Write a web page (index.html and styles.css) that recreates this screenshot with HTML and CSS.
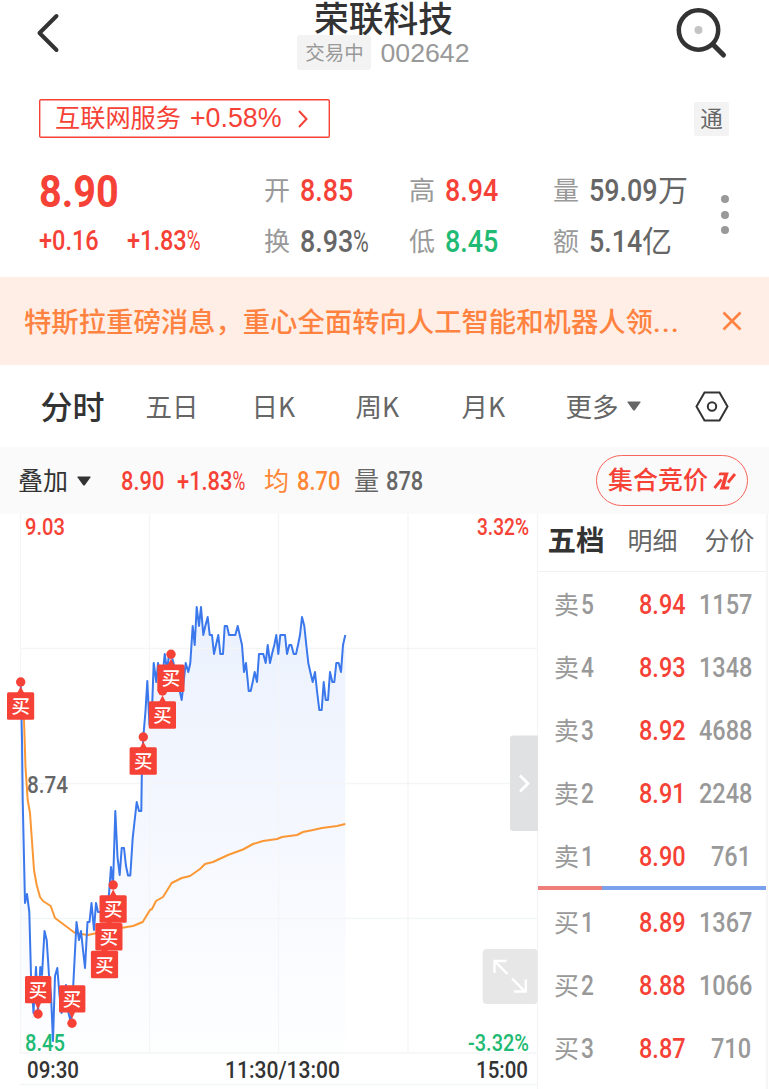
FILE: index.html
```html
<!DOCTYPE html>
<html lang="zh-CN">
<head>
<meta charset="utf-8">
<title>荣联科技 002642</title>
<link rel="stylesheet" href="styles.css">
</head>
<body>
<div class="app">
  <header class="header">
    <svg class="back" width="26" height="42" viewBox="0 0 26 42"><path d="M20.5 4 3.5 21 20.5 38"/></svg>
    <div class="stock">
      <h1>荣联科技</h1>
      <div class="sub"><span class="status">交易中</span><span class="code">002642</span></div>
    </div>
    <svg class="search" width="54" height="54" viewBox="0 0 54 54"><circle class="ring" cx="24.5" cy="24" r="19.7"/><path d="M39 38.5 49.5 49"/><circle class="dot" cx="24.5" cy="24" r="4"/></svg>
  </header>

  <div class="sector-row">
    <div class="sector"><span>互联网服务</span><b>+0.58%</b><svg width="12" height="20" viewBox="0 0 12 20"><path d="M2 2 9.5 10 2 18"/></svg></div>
    <span class="connect">通</span>
  </div>

  <section class="quote">
    <div class="last">
      <div class="price num">8.90</div>
      <div class="change"><span class="num">+0.16</span><span class="num">+1.83<em>%</em></span></div>
    </div>
    <div class="stats">
      <div class="stat"><span>开</span><b class="num red">8.85</b></div>
      <div class="stat"><span>高</span><b class="num red">8.94</b></div>
      <div class="stat"><span>量</span><b class="num four">59.09</b><i>万</i></div>
      <div class="stat"><span>换</span><b class="num">8.93<em>%</em></b></div>
      <div class="stat"><span>低</span><b class="num green">8.45</b></div>
      <div class="stat"><span>额</span><b class="num three">5.14</b><i>亿</i></div>
    </div>
    <div class="more-dots"><i></i><i></i><i></i></div>
  </section>

  <div class="banner">
    <p>特斯拉重磅消息，重心全面转向人工智能和机器人领<span>...</span></p>
    <svg width="20" height="20" viewBox="0 0 20 20"><path d="M1.5 1.5 18.5 18.5M18.5 1.5 1.5 18.5"/></svg>
  </div>

  <nav class="tabs">
    <a class="active">分时</a><a>五日</a><a>日K</a><a>周K</a><a>月K</a>
    <a class="drop">更多<svg width="14" height="10" viewBox="0 0 14 10"><path d="M1 .5H13Q14 .5 13.4 1.5L8 9Q7 10 6 9L.6 1.5Q0 .5 1 .5Z"/></svg></a>
    <svg class="hex" width="34" height="31" viewBox="0 0 34 31"><path d="M9.5 1.5H24.5L32.5 15.5 24.5 29.5H9.5L1.5 15.5Z"/><circle cx="17" cy="15.5" r="4.2"/></svg>
  </nav>

  <div class="toolbar">
    <span class="overlay">叠加</span>
    <svg class="tri" width="14" height="10" viewBox="0 0 14 10"><path d="M1 .5H13Q14 .5 13.4 1.5L8 9Q7 10 6 9L.6 1.5Q0 .5 1 .5Z"/></svg>
    <b class="num red t1">8.90</b><b class="num red t2">+1.83<em>%</em></b>
    <span class="avg">均</span><b class="num avg t3">8.70</b>
    <span class="vol">量</span><b class="num t4">878</b>
    <div class="auction">集合竞价<svg width="24" height="20" viewBox="0 0 24 20"><path class="s" d="M1.5 17 8.5 8.5M15 11.5 22 3"/><path class="f" d="M6.5 1.5H15.8L14.8 4.2 11.8 15.6H16.8L15.6 18.4H6.6L7.8 15.6 11 4.2H5.5Z"/></svg></div>
  </div>

  <main class="main">
    <svg class="chart" width="538" height="575" viewBox="0 514 538 575">
      <defs>
        <linearGradient id="fade" gradientUnits="userSpaceOnUse" x1="0" y1="607" x2="0" y2="1053">
          <stop offset="0" stop-color="#3573ee" stop-opacity=".1"/><stop offset="1" stop-color="#3573ee" stop-opacity=".005"/>
        </linearGradient>
        <g id="up"><circle r="4.7"/><path d="M0 4.5 3.5 11H-3.5Z"/><rect x="-13.7" y="10.3" width="27.2" height="27.4" rx="1.5"/><text y="31">买</text></g>
        <g id="down"><circle r="4.7"/><path d="M0-4.5 3.5-12H-3.5Z"/><rect x="-13" y="-38" width="26.4" height="27.2" rx="1.5"/><text y="-17.5">买</text></g>
      </defs>
      <path class="area" d="M20.7 683 22 740 22.7 800 25 903 27 894 29.3 912 31 975 33.5 1013 36 967 38 1012 40.3 967 42 975 44.5 931 46.7 940 49 975 51 995 53 1041 55 976 57.3 968 59.5 995 61.5 1013 64 1000 66 985 68.5 1013 71 1023 73 990 76.5 922 79 940 81 931 83 950 85 968 87.5 922 89.5 922 91.5 903 94 930 96 903 98 912 105 912 109 894 111 867 113 885 115.3 811 117.5 857 119.7 875 121.7 848 124 848 126 866 128 875.5 130.3 875.5 132.7 838 136.7 802 139 811 141.3 811 142 760 143.3 737 145.5 711 147.3 681 149.5 725 152 710 153.7 663 156.3 682 158 663 160 672 162 682 164.7 654 167 670 169 655 171 654 173.5 663 176 673 178 673 179.5 690 181.7 700 185.7 663 188.3 672 190.3 663 192.7 626 194.7 645 196.7 607 199 626 201 607 203.3 635 205.3 626 207.7 617 209.7 635 212 635 214 654 216 645 218.3 635 220.3 654 223 654 224.7 626 227 626 229 635 235.3 635 237.7 626 239.7 635 242 645 244 672 246 663 248.7 691 250.7 691 252.7 682 254.7 672 257 682 259 654 263.3 654 265.7 663 267.7 645 270 663 272 654 274.3 645 276.3 635 278.3 654 280.3 635 285 635 287 654 289.3 645 291.3 645 293.7 654 296 654 298 645 300 635 302 617 304.3 626 306.3 645 308.3 663 310.3 672 312.7 682 315 672 317 691 319.3 710 321.7 710 323.7 682 325.7 700 328 700 330 672 332.3 682 334.3 682 336.3 663 338.7 663 341 672 343 645 345.3 635V1053H20.7Z"/>
      <path class="grid" d="M20.5 514V1053M149.5 514V1053M278.5 514V1053M408 514V1053M537.5 514V1089M20 648.5H538M20 783.5H538M20 918.5H538M20 1053H538M20 1084.5H538"/>
      <path class="avg-line" d="M21 690 24 720 25.5 767 27.7 800 30 813 34 870 36.7 885 40 897 43 901 50.7 906 55 918 61.7 923 68.3 928 75 933 81 934 88 935 97 933 110 930 126.7 927 133 926 142.7 922 150 910 152 909 156 901 163 897 171.7 883 181.7 878 190 876 200 869 205 864 213 862 228 855 243 849.5 253 844 263 841 277 839 282 837 297 835 303 832 313 830 322 828 337 826 345.3 824"/>
      <g class="labels">
        <text class="red" x="25" y="534.5" textLength="40" lengthAdjust="spacingAndGlyphs">9.03</text>
        <text class="red" x="477" y="534.5" textLength="52" lengthAdjust="spacingAndGlyphs">3.32%</text>
        <text x="27" y="792.5" textLength="41" lengthAdjust="spacingAndGlyphs">8.74</text>
        <text class="green" x="25" y="1050.5" textLength="40" lengthAdjust="spacingAndGlyphs">8.45</text>
        <text class="green" x="468" y="1050.5" textLength="61" lengthAdjust="spacingAndGlyphs">-3.32%</text>
        <g class="time">
          <text x="27" y="1078" textLength="52" lengthAdjust="spacingAndGlyphs">09:30</text>
          <text x="225" y="1078" textLength="115" lengthAdjust="spacingAndGlyphs">11:30/13:00</text>
          <text x="476" y="1078" textLength="52" lengthAdjust="spacingAndGlyphs">15:00</text>
        </g>
      </g>
      <path class="price-line" d="M20.7 683 22 740 22.7 800 25 903 27 894 29.3 912 31 975 33.5 1013 36 967 38 1012 40.3 967 42 975 44.5 931 46.7 940 49 975 51 995 53 1041 55 976 57.3 968 59.5 995 61.5 1013 64 1000 66 985 68.5 1013 71 1023 73 990 76.5 922 79 940 81 931 83 950 85 968 87.5 922 89.5 922 91.5 903 94 930 96 903 98 912 105 912 109 894 111 867 113 885 115.3 811 117.5 857 119.7 875 121.7 848 124 848 126 866 128 875.5 130.3 875.5 132.7 838 136.7 802 139 811 141.3 811 142 760 143.3 737 145.5 711 147.3 681 149.5 725 152 710 153.7 663 156.3 682 158 663 160 672 162 682 164.7 654 167 670 169 655 171 654 173.5 663 176 673 178 673 179.5 690 181.7 700 185.7 663 188.3 672 190.3 663 192.7 626 194.7 645 196.7 607 199 626 201 607 203.3 635 205.3 626 207.7 617 209.7 635 212 635 214 654 216 645 218.3 635 220.3 654 223 654 224.7 626 227 626 229 635 235.3 635 237.7 626 239.7 635 242 645 244 672 246 663 248.7 691 250.7 691 252.7 682 254.7 672 257 682 259 654 263.3 654 265.7 663 267.7 645 270 663 272 654 274.3 645 276.3 635 278.3 654 280.3 635 285 635 287 654 289.3 645 291.3 645 293.7 654 296 654 298 645 300 635 302 617 304.3 626 306.3 645 308.3 663 310.3 672 312.7 682 315 672 317 691 319.3 710 321.7 710 323.7 682 325.7 700 328 700 330 672 332.3 682 334.3 682 336.3 663 338.7 663 341 672 343 645 345.3 635"/>
      <g class="markers">
        <use href="#up" x="20.7" y="682"/>
        <use href="#down" x="38" y="1014"/><use href="#down" x="72" y="1023.3"/>
        <use href="#up" x="104.6" y="940.5"/><use href="#up" x="109" y="912.8"/><use href="#up" x="113.2" y="885"/>
        <use href="#up" x="143.3" y="737"/><use href="#up" x="162.5" y="691"/><use href="#up" x="171" y="654.3"/>
      </g>
      <g class="handle"><path d="M538 735.5H513Q510 735.5 510 738.5V828Q510 831 513 831H538Z"/><path class="arrow" d="M520 775.5 528 783.5 520 791.5"/></g>
      <g class="expand"><rect x="482.7" y="949" width="55" height="55" rx="4"/><path d="M507.5 974 495 961.5M494.5 973V961H506.5M512 978.5 525 991.5M514 991.5H525.8V979.5"/></g>
    </svg>

    <aside class="book">
      <div class="book-tabs"><a class="active">五档</a><a>明细</a><a>分价</a></div>
      <div class="level"><span>卖<b class="num">5</b></span><b class="num red">8.94</b><b class="num qty">1157</b></div>
      <div class="level"><span>卖<b class="num">4</b></span><b class="num red">8.93</b><b class="num qty">1348</b></div>
      <div class="level"><span>卖<b class="num">3</b></span><b class="num red">8.92</b><b class="num qty">4688</b></div>
      <div class="level"><span>卖<b class="num">2</b></span><b class="num red">8.91</b><b class="num qty">2248</b></div>
      <div class="level"><span>卖<b class="num">1</b></span><b class="num red">8.90</b><b class="num qty">761</b></div>
      <div class="ratio"><i></i></div>
      <div class="level"><span>买<b class="num">1</b></span><b class="num red">8.89</b><b class="num qty">1367</b></div>
      <div class="level"><span>买<b class="num">2</b></span><b class="num red">8.88</b><b class="num qty">1066</b></div>
      <div class="level"><span>买<b class="num">3</b></span><b class="num red">8.87</b><b class="num qty">710</b></div>
    </aside>
  </main>
</div>
</body>
</html>
```
FILE: styles.css
```css
* { box-sizing: border-box; }
html, body { margin: 0; overflow: hidden; }
body {
  background: #fff;
  color: #666;
  font-family: "Liberation Sans", "Noto Sans CJK SC", sans-serif;
}
svg { display: block; flex: none; fill: none; }
b, i, em { font-style: normal; font-weight: 400; }
.app { width: 769px; height: 1089px; overflow: hidden; }

/* Narrow numerals */
.num {
  display: inline-block;
  font-family: Roboto, sans-serif;
  font-weight: 500;
  transform: scaleX(.84);
  transform-origin: left center;
  white-space: nowrap;
}
.num em { display: inline-block; transform: scaleX(.8); transform-origin: left center; }
.red { color: #f64236; }
.green { color: #1fba74; }

.header { display: flex; justify-content: space-between; height: 84px; padding: 0 41px 0 36px; }
.back { margin-top: 12px; stroke: #333; stroke-width: 4; stroke-linecap: round; stroke-linejoin: round; }
.stock { display: flex; flex-direction: column; align-items: center; margin-left: 31px; }
.stock h1 { margin: 0; height: 35px; font-size: 34.8px; line-height: 35px; font-weight: 500; color: #333; font-family: "Noto Sans CJK SC", sans-serif; }
.sub { display: flex; gap: 9px; height: 35px; line-height: 35px; }
.status { width: 74px; text-align: center; background: #f3f3f3; border-radius: 3px; font-size: 19.5px; color: #999; line-height: 36px; }
.code { font-size: 26.7px; color: #999; line-height: 37px; }
.search { margin-top: 6px; stroke-linecap: round; }
.search .ring { stroke: #333; stroke-width: 4.5; }
.search path { stroke: #333; stroke-width: 5; }
.search .dot { fill: #c4c4c4; }

.sector-row { display: flex; justify-content: space-between; height: 76px; padding: 15px 40px 0 39px; }
.sector { display: flex; align-items: center; width: 291px; height: 39px; padding-left: 16px; box-shadow: inset 0 0 0 1.4px #f64236; border-radius: 2px; color: #f64236; font-size: 25.2px; line-height: 39px; }
.sector b { margin-left: 9px; font-size: 26.8px; }
.sector svg { margin-left: 15px; stroke: #f64236; stroke-width: 2; }
.connect { width: 35px; height: 34px; margin-top: 3px; background: #f3f3f3; border-radius: 2px; text-align: center; font-size: 22.5px; line-height: 36px; }

.quote { display: flex; height: 117px; padding-left: 39px; }
.last { width: 225px; color: #f64236; }
.price { display: block; height: 56px; font-size: 43.5px; line-height: 65px; font-weight: 700; transform: scaleX(.91); }
.change { display: grid; grid-template-columns: 88px 1fr; font-size: 28px; line-height: 50px; }
.stats { display: grid; grid-template-columns: 145px 144px 150px; grid-template-rows: 51px 50px; padding-top: 5px; }
.stat { display: flex; line-height: 51px; }
.stat span { width: 36px; font-size: 26px; color: #999; line-height: 52px; }
.stat .num { font-size: 32px; }
.stat i { font-size: 30px; line-height: 51px; }
.four { width: 69px; }
.three { width: 53px; }
.more-dots { display: flex; flex-direction: column; gap: 7.5px; padding: 35px 0 0 18px; }
.more-dots i { width: 8px; height: 8px; border-radius: 50%; background: #999; }

.banner { display: flex; align-items: center; justify-content: space-between; height: 88px; padding: 0 27px 0 24px; background: #ffeee5; color: #ff8240; }
.banner p { margin: 0; font: 500 27.35px/88px "Noto Sans CJK SC", sans-serif; white-space: nowrap; }
.banner p span { font-family: Roboto, sans-serif; letter-spacing: 1.5px; }
.banner svg { stroke: #ff8240; stroke-width: 2.6; }

.tabs { display: grid; grid-template-columns: 105px 106px 104px 106px 104px 129px 34px; height: 82px; padding-left: 40.5px; align-items: center; font: 26.5px/80px "Noto Sans CJK SC", sans-serif; }
.tabs .active { font-size: 32px; line-height: 78px; height: 80px; font-weight: 500; color: #333; }
.drop { display: flex; align-items: center; gap: 8px; }
.drop svg { fill: #666; }
.hex { stroke: #333; stroke-width: 2; }

.toolbar { display: flex; align-items: center; height: 67px; padding-left: 18px; background: #fafafa; font-size: 25px; line-height: 66px; }
.overlay { width: 59px; color: #333; }
.tri { fill: #333; }
.toolbar .num { font-size: 26px; }
.toolbar .t1 { margin-left: 30px; width: 56px; }
.toolbar .t2 { width: 87px; }
.avg { color: #ff8634; width: 33px; }
.toolbar .t3 { width: 57px; }
.vol { width: 32px; }
.toolbar .t4 { width: 210px; }
.auction { display: flex; align-items: center; gap: 5px; width: 152px; height: 51px; padding-left: 11px; border: 1px solid #f5645a; border-radius: 26px; color: #f64236; font: 500 25px/44px "Noto Sans CJK SC", sans-serif; align-items: flex-start; }
.auction svg { margin-top: 15px; }
.auction .s { stroke: #f64236; stroke-width: 2.8; }
.auction .f { fill: #f64236; }

.main { display: flex; height: 575px; }
.chart { overflow: visible; }
.grid { stroke: #f4f5f6; stroke-width: 1.3; }
.area { fill: url(#fade); }
.price-line { stroke: #3a78ec; stroke-width: 2; stroke-linejoin: round; }
.avg-line { stroke: #fb9835; stroke-width: 2; stroke-linejoin: round; }
.labels { font: 500 24.3px Roboto, sans-serif; fill: #666; }
.labels .red { fill: #f64236; }
.labels .green { fill: #1fba74; }
.time { fill: #333; }
.markers { fill: #f64236; font: 500 18.5px "Noto Sans CJK SC", sans-serif; }
.markers text, #up text, #down text { fill: #fff; text-anchor: middle; }
.handle { fill: #e0e1e3; }
.arrow { stroke: #fff; stroke-width: 2.8; fill: none; }
.expand { fill: #e7e7e7; }
.expand path { stroke: #fff; stroke-width: 2.3; fill: none; }

.book { width: 230px; border-right: 2px solid #f6f6f6; }
.book-tabs { display: grid; grid-template-columns: 80px 77px 1fr; height: 58px; padding: 0 0 4px 9.5px; border-bottom: 1px solid #f1f1f1; font-size: 25px; line-height: 50px; align-items: center; }
.book-tabs .active { font-size: 28.5px; font-weight: 700; color: #333; }
.level { display: grid; grid-template-columns: 84px 50px 62px; height: 63px; padding-left: 17px; line-height: 66px; font-size: 28px; }
.level span { margin-left: -1px; font-size: 25px; line-height: 64px; color: #999; white-space: nowrap; }
.level span .num { font-size: 27px; margin-left: 2px; line-height: 66px; }
.level .qty { color: #999; text-align: right; transform-origin: right center; }
.ratio { height: 4px; margin: -1px 0 0; background: #7ba0ee; }
.ratio i { display: block; width: 64px; height: 4px; background: #ef7e78; }
```
